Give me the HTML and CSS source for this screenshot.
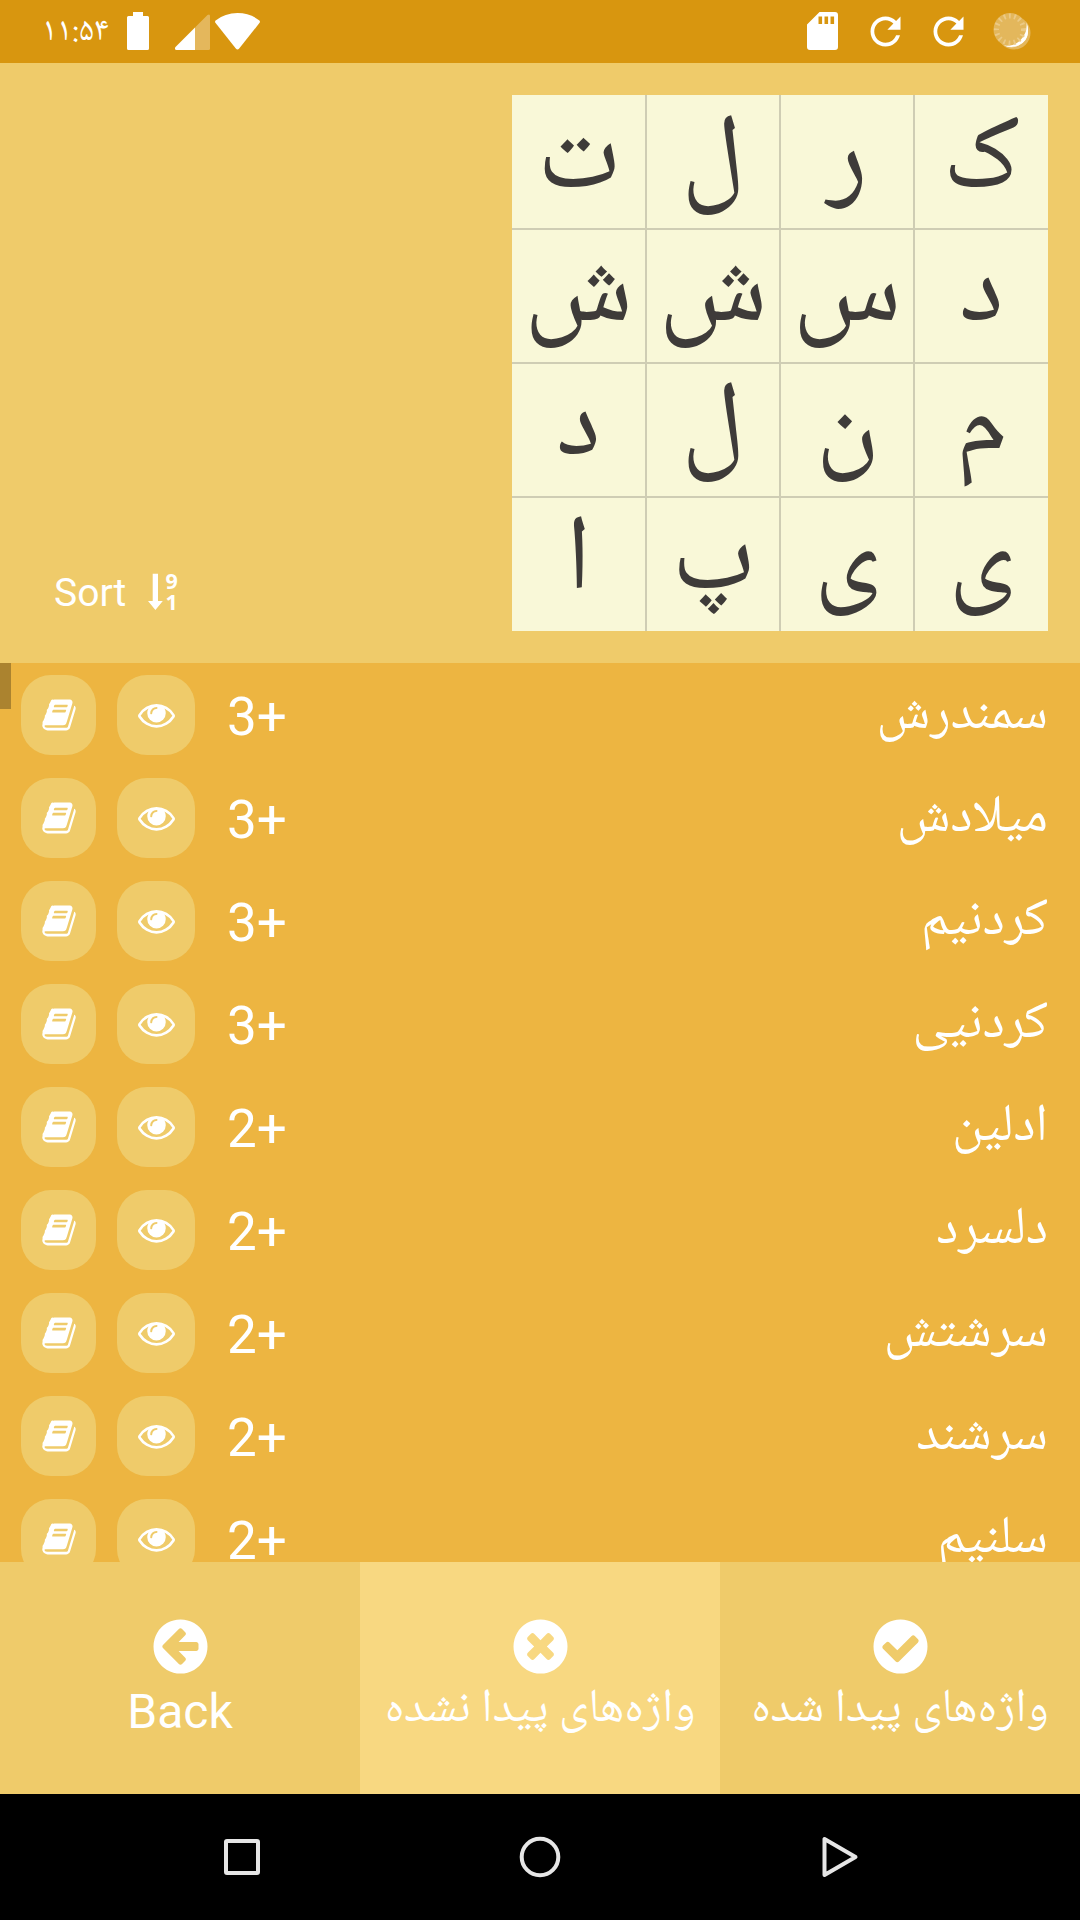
FILE: index.html
```html
<!DOCTYPE html>
<html lang="fa">
<head>
<meta charset="utf-8">
<title>واژه‌ها</title>
<link rel="stylesheet" href="styles.css">
</head>
<body>
<svg class="defs" width="0" height="0">
  <symbol id="book" viewBox="0 0 1792 1792"><path d="M1703 478q40 57 18 129l-275 906q-19 64-76.5 107.5t-122.5 43.5h-923q-77 0-148.5-53.5t-99.5-131.5q-24-67-2-127 0-4 3-27t4-37q1-8-3-21.5t-3-19.5q2-11 8-21t16.5-23.5 16.5-23.5q23-38 45-91.5t30-91.5q3-10 .5-30t-.5-28q3-11 17-28t17-23q21-36 42-92t25-90q1-9-2.5-32t.5-28q4-13 22-30.5t22-22.5q19-26 42.5-84.5t27.5-96.5q1-8-3-25.5t-2-26.5q2-8 9-18t18-23 17-21q8-12 16.5-30.5t15-35 16-36 19.5-32 26.5-23.5 36-11.5 47.5 5.5l-1 3q38-9 51-9h761q74 0 114 56t18 130l-274 906q-36 119-71.5 153.5t-128.5 34.5h-869q-27 0-38 15-11 16-1 43 24 70 144 70h923q29 0 56-15.5t35-41.5l300-987q7-22 5-57 38 15 59 43zm-1064 2q-4 13 2 22.5t20 9.5h608q13 0 25.5-9.5t16.5-22.5l21-64q4-13-2-22.5t-20-9.5h-608q-13 0-25.5 9.5t-16.5 22.5zm-83 256q-4 13 2 22.5t20 9.5h608q13 0 25.5-9.5t16.5-22.5l21-64q4-13-2-22.5t-20-9.5h-608q-13 0-25.5 9.5t-16.5 22.5z"/></symbol>
  <symbol id="eye" viewBox="0 0 1792 1792"><path d="M1664 960q-152-236-381-353 61 104 61 225 0 185-131.5 316.5t-316.5 131.5-316.5-131.5-131.5-316.5q0-121 61-225-229 117-381 353 133 205 333.5 326.5t434.5 121.5 434.5-121.5 333.5-326.5zm-720-384q0-20-14-34t-34-14q-125 0-214.5 89.5t-89.5 214.5q0 20 14 34t34 14 34-14 14-34q0-86 61-147t147-61q20 0 34-14t14-34zm848 384q0 34-20 69-140 230-376.5 368.5t-499.5 138.5-499.5-139-376.5-368q-20-35-20-69t20-69q140-229 376.5-368t499.5-139 499.5 139 376.5 368q20 35 20 69z"/></symbol>
  <symbol id="refresh" viewBox="0 0 24 24"><path d="M17.65 6.35C16.2 4.9 14.21 4 12 4c-4.42 0-7.99 3.58-7.99 8s3.57 8 7.99 8c3.73 0 6.84-2.55 7.73-6h-2.08c-.82 2.33-3.04 4-5.65 4-3.31 0-6-2.69-6-6s2.69-6 6-6c1.66 0 3.14.69 4.22 1.78L13 11h7V4l-2.35 2.35z"/></symbol>
</svg>

<header class="status">
  <div class="status-group status-start">
    <span class="time">۱۱:۵۴</span>
    <svg width="22" height="38" viewBox="0 0 22 38"><path d="M6 0h10v4h4.500q1.500 0 1.500 1.500v31q0 1.500-1.500 1.500h-19q-1.500 0-1.500-1.500v-31q0-1.500 1.500-1.500h4.500z"/></svg>
    <svg class="signal" width="35" height="36" viewBox="0 0 35 36"><path d="M20 13.500v22.500H1.500q-2.500-.7-1-3z"/><path class="faded" d="M20 13.500L32.500 1q2.500-1.500 2.500 1v32.500q0 1.500-1.500 1.500H20z"/></svg>
    <svg class="wifi" width="45" height="37" viewBox="0 0 45 37"><path d="M.6 7.500Q10 0 22.500 0T44.400 7.500q1 1 .2 2.300L24.200 35.600q-1.700 1.800-3.400 0L.4 9.800q-.8-1.300.2-2.300z"/></svg>
  </div>
  <div class="status-group status-end">
    <svg class="sd" width="31" height="38" viewBox="0 0 31 38"><path fill-rule="evenodd" d="M12.500 0H28q3 0 3 3v32q0 3-3 3H3q-3 0-3-3V12.500zM11.500 4.500v7.500h3.600V4.500zM17.500 4.500v7.500h3.600V4.500zM23.500 4.500v7.500h3.600V4.500z"/></svg>
    <svg class="reload" width="45" height="45"><use href="#refresh"/></svg>
    <svg class="reload" width="45" height="45"><use href="#refresh"/></svg>
    <svg width="38" height="38" viewBox="0 0 38 38"><circle class="faded" cx="21" cy="21" r="16.500"/><path d="M33.500 10q5.500 17-8 23.500-8 4-15.500-1 10 5.500 18-1.500 8-8 5.500-21z"/><circle fill="#e3b75c" cx="17" cy="17.500" r="16.500"/><path d="M33.500 11q4.500 13-4.500 20-8 6.500-18 2.500 10 1 16.500-5.500 7-7 6-17z"/><circle fill="none" stroke="#ecca86" stroke-width="5" stroke-dasharray="1.800 3.380" cx="17" cy="17.500" r="13.500"/></svg>
  </div>
</header>

<section class="board">
  <div class="sort">
    <span>Sort</span>
    <svg width="32" height="38" viewBox="0 0 32 38"><path d="M4.700.8h5.300V28h4.800L7.400 37 0 28h4.700z"/><text x="17.500" y="15.800">9</text><text x="17.500" y="36.800">1</text></svg>
  </div>
  <div class="grid" dir="rtl">
    <b>ک</b><b>ر</b><b>ل</b><b>ت</b>
    <b>د</b><b>س</b><b>ش</b><b>ش</b>
    <b>م</b><b>ن</b><b>ل</b><b>د</b>
    <b>ی</b><b>ی</b><b>پ</b><b>ا</b>
  </div>
</section>

<main class="words">
  <i class="thumb"></i>
  <div class="row"><span class="btn book"><svg><use href="#book"/></svg></span><span class="btn eye"><svg><use href="#eye"/></svg></span><span class="score">3+</span><span class="word">سمندرش</span></div>
  <div class="row"><span class="btn book"><svg><use href="#book"/></svg></span><span class="btn eye"><svg><use href="#eye"/></svg></span><span class="score">3+</span><span class="word">میلادش</span></div>
  <div class="row"><span class="btn book"><svg><use href="#book"/></svg></span><span class="btn eye"><svg><use href="#eye"/></svg></span><span class="score">3+</span><span class="word">کردنیم</span></div>
  <div class="row"><span class="btn book"><svg><use href="#book"/></svg></span><span class="btn eye"><svg><use href="#eye"/></svg></span><span class="score">3+</span><span class="word">کردنیی</span></div>
  <div class="row"><span class="btn book"><svg><use href="#book"/></svg></span><span class="btn eye"><svg><use href="#eye"/></svg></span><span class="score">2+</span><span class="word">ادلین</span></div>
  <div class="row"><span class="btn book"><svg><use href="#book"/></svg></span><span class="btn eye"><svg><use href="#eye"/></svg></span><span class="score">2+</span><span class="word">دلسرد</span></div>
  <div class="row"><span class="btn book"><svg><use href="#book"/></svg></span><span class="btn eye"><svg><use href="#eye"/></svg></span><span class="score">2+</span><span class="word">سرشتش</span></div>
  <div class="row"><span class="btn book"><svg><use href="#book"/></svg></span><span class="btn eye"><svg><use href="#eye"/></svg></span><span class="score">2+</span><span class="word">سرشند</span></div>
  <div class="row"><span class="btn book"><svg><use href="#book"/></svg></span><span class="btn eye"><svg><use href="#eye"/></svg></span><span class="score">2+</span><span class="word">سلنیم</span></div>
</main>

<footer class="tabs">
  <div class="tab">
    <svg viewBox="0 0 1792 1792"><path d="M1408 960v-128q0-26-19-45t-45-19h-502l189-189q19-19 19-45t-19-45l-91-91q-18-18-45-18t-45 18l-362 362-91 91q-18 18-18 45t18 45l91 91 362 362q18 18 45 18t45-18l91-91q18-18 18-45t-18-45l-189-189h502q26 0 45-19t19-45zm256-64q0 209-103 385.500t-279.500 279.500-385.500 103-385.500-103-279.500-279.500-103-385.500 103-385.500 279.500-279.500 385.500-103 385.500 103 279.500 279.500 103 385.500z"/></svg>
    <span class="latin">Back</span>
  </div>
  <div class="tab active">
    <svg viewBox="0 0 1792 1792"><path d="M1277 1122q0-26-19-45l-181-181 181-181q19-19 19-45 0-27-19-46l-90-90q-19-19-46-19-26 0-45 19l-181 181-181-181q-19-19-45-19-27 0-46 19l-90 90q-19 19-19 46 0 26 19 45l181 181-181 181q-19 19-19 45 0 27 19 46l90 90q19 19 46 19 26 0 45-19l181-181 181 181q19 19 45 19 27 0 46-19l90-90q19-19 19-46zm387-226q0 209-103 385.500t-279.500 279.500-385.500 103-385.500-103-279.500-279.500-103-385.500 103-385.500 279.500-279.500 385.500-103 385.500 103 279.500 279.500 103 385.500z"/></svg>
    <span dir="rtl">واژه‌های پیدا نشده</span>
  </div>
  <div class="tab">
    <svg viewBox="0 0 1792 1792"><path d="M1412 734q0-28-18-46l-91-90q-19-19-45-19t-45 19l-408 407-226-226q-19-19-45-19t-45 19l-91 90q-18 18-18 46 0 27 18 45l362 362q19 19 45 19 27 0 46-19l543-543q18-18 18-45zm252 162q0 209-103 385.500t-279.500 279.500-385.500 103-385.500-103-279.500-279.500-103-385.500 103-385.500 279.500-279.500 385.500-103 385.500 103 279.500 279.500 103 385.500z"/></svg>
    <span dir="rtl">واژه‌های پیدا شده</span>
  </div>
</footer>

<nav class="nav">
  <svg width="42" height="42" viewBox="0 0 42 42"><rect x="5" y="5" width="32" height="32" rx="1"/></svg>
  <svg width="42" height="42" viewBox="0 0 42 42"><circle cx="21" cy="21" r="18.300"/></svg>
  <svg width="42" height="42" viewBox="0 0 42 42"><path d="M7.500 3v36l31-18z"/></svg>
</nav>
</body>
</html>
```
FILE: styles.css
```css
* { box-sizing: border-box; }

body {
  margin: 0;
  width: 1080px;
  height: 1920px;
  display: flex;
  flex-direction: column;
  overflow: hidden;
  color: #fff;
  font-family: "Noto Naskh Arabic", "Noto Sans Arabic", serif;
}

svg { display: block; fill: #fff; flex: none; }
.defs { position: absolute; }
.faded { opacity: .32; }

.status {
  height: 63px;
  display: flex;
  justify-content: space-between;
  background: #d8960f;
}
.status-group { display: flex; align-items: flex-start; padding-top: 12px; }
.status-start { padding-left: 42px; }
.time { width: 85px; font-size: 33.5px; line-height: 41px; }
.signal { margin: 2px 0 0 26px; }
.wifi { margin: 1px 0 0 5px; }
.status-end { padding-right: 49px; }
.sd { margin-right: 25px; }
.reload { margin: -3px 18px 0 0; }
.reload + svg:last-child { margin-left: 4px; }

.board {
  height: 600px;
  padding: 32px 32px 0 54px;
  display: flex;
  justify-content: space-between;
  background: #efcb6a;
}
.sort {
  height: 536px;
  padding-bottom: 17px;
  display: flex;
  align-items: flex-end;
  gap: 22px;
  font: 39px/42px Roboto, sans-serif;
}
.sort svg { overflow: visible; margin-bottom: 3px; }
.sort text { font: bold 21.5px "Noto Sans", sans-serif; }
.grid {
  width: 536px;
  height: 536px;
  display: grid;
  grid-template: repeat(4, 134px) / repeat(4, 134px);
  background: #f9f8d8;
  color: #3e3b39;
}
.grid b {
  font-weight: 400;
  font-size: 107px;
  line-height: 135px;
  text-align: center;
  border: 1px solid #cfcdb4;
}
.grid b:nth-child(-n+4) { border-top: 0; line-height: 138px; }
.grid b:nth-child(n+13) { border-bottom: 0; }
.grid b:nth-child(4n+1) { border-right: 0; }
.grid b:nth-child(4n) { border-left: 0; }

.words {
  position: relative;
  height: 899px;
  overflow: hidden;
  background: #edb541;
}
.thumb {
  position: absolute;
  left: 0;
  top: 0;
  width: 11px;
  height: 46px;
  background: #ab832f;
}
.row {
  height: 103px;
  padding: 12px 32px 11px 21px;
  display: flex;
  align-items: center;
}
.btn {
  height: 80px;
  border-radius: 30px;
  background: #efcb6a;
  display: flex;
  align-items: center;
  justify-content: center;
}
.btn.book { width: 75px; margin-right: 21px; }
.btn.book svg { width: 36px; height: 36px; }
.btn.eye { width: 78px; padding-bottom: 1px; }
.btn.eye svg { width: 37px; height: 37px; }
.score { margin: 4px 0 0 32px; font: 53px/80px Roboto, sans-serif; }
.word { margin: 4px 0 0 auto; font-size: 53px; line-height: 80px; }

.tabs { height: 232px; display: grid; grid-template-columns: repeat(3, 360px); }
.tab {
  padding-top: 53px;
  display: flex;
  flex-direction: column;
  align-items: center;
  background: #efcb6a;
}
.tab.active { background: #f8d881; }
.tab svg { width: 63px; height: 63px; }
.tab span { font-size: 47.4px; line-height: 66px; white-space: nowrap; }
.tab .latin { font-family: Roboto, sans-serif; font-size: 48px; padding-top: 1px; }

.nav {
  height: 126px;
  padding: 0 221px 0 221px;
  display: flex;
  align-items: center;
  justify-content: space-between;
  background: #000;
}
.nav svg { fill: none; stroke: #e6e6e6; stroke-width: 4; stroke-linejoin: round; }
```
